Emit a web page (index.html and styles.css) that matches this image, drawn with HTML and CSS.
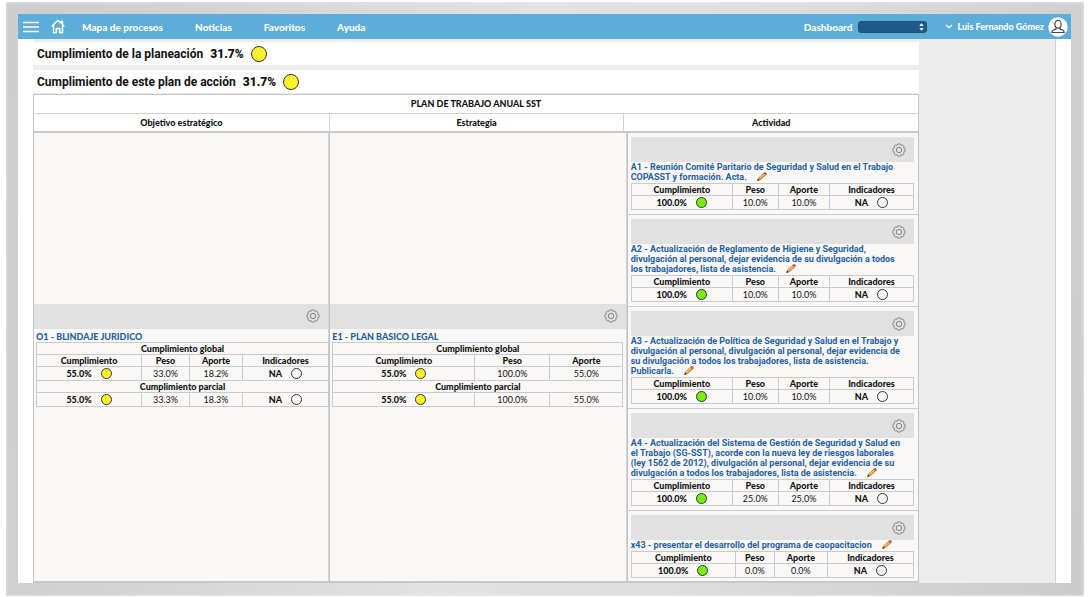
FILE: index.html
```html
<!DOCTYPE html>
<html lang="es">
<head>
<meta charset="utf-8">
<title>Plan de trabajo anual SST</title>
<link rel="stylesheet" href="styles.css">
</head>
<body>
<svg class="defs" aria-hidden="true">
  <symbol id="gear" viewBox="0 0 14 14">
    <g fill="none" stroke="#777" stroke-width="0.9">
      <path d="M5.050 2.300A2 2 0 0 1 8.950 2.300A2 2 0 0 1 11.700 5.050A2 2 0 0 1 11.700 8.950A2 2 0 0 1 8.950 11.700A2 2 0 0 1 5.050 11.700A2 2 0 0 1 2.300 8.950A2 2 0 0 1 2.300 5.050A2 2 0 0 1 5.050 2.300Z"/>
      <circle cx="7" cy="7" r="2.700"/>
    </g>
  </symbol>
  <symbol id="pencil" viewBox="0 0 10 9">
    <path d="M.5 8.600L1.600 5.900 6.900 1.100 8.700 3 3.300 7.700Z" fill="#f0a33c" stroke="#8a5220" stroke-width=".6"/>
    <path d="M6.600 1.300L7.800.3Q9.700.4 9.600 2L8.600 3Z" fill="#d0604f" stroke="#7b4a40" stroke-width=".4"/>
    <path d="M.4 8.700L1.200 6.700 2.500 8Z" fill="#222"/>
    <path d="M2.300 6.300L7 2.200" stroke="#ffe0a0" stroke-width=".7"/>
  </symbol>
</svg>
<div class="frame">
  <div class="screen">
    <header class="topbar">
      <button class="icon-btn menu" aria-label="Menú"><svg width="16" height="12" viewBox="0 0 16 12"><path d="M0 1.500H16M0 6H16M0 10.500H16" stroke="#fff" stroke-width="1.500"/></svg></button>
      <a class="home" href="#" aria-label="Inicio"><svg width="14" height="15" viewBox="0 0 14 15"><path d="M.7 7.500L7 1.200 10 4.200V2.500H11.500V5.700L13.300 7.500M2.500 6.500V13.800H5.300V9.500H8.700V13.800H11.500V6.500" fill="none" stroke="#fff" stroke-width="1.500" stroke-linejoin="round"/></svg></a>
      <nav class="nav">
        <a href="#">Mapa de procesos</a>
        <a href="#">Noticias</a>
        <a href="#">Favoritos</a>
        <a href="#">Ayuda</a>
      </nav>
      <label class="dash" for="dashboard">Dashboard</label>
      <span class="select-wrap">
        <select id="dashboard"><option></option></select>
        <svg class="arrows" width="5" height="8" viewBox="0 0 5 8"><path d="M.3 3L2.500.3 4.700 3ZM.3 5L2.500 7.700 4.700 5Z" fill="#fff"/></svg>
      </span>
      <button class="icon-btn user">
        <svg width="8" height="5" viewBox="0 0 8 5"><path d="M1 1L4 3.700 7 1" fill="none" stroke="#fff" stroke-width="1.300"/></svg>
        <span>Luis Fernando Gómez</span>
        <svg class="avatar" width="20" height="20" viewBox="0 0 20 20"><circle cx="10" cy="10" r="9.700" fill="#fff"/><g fill="none" stroke="#444" stroke-width="1.200"><ellipse cx="10" cy="7.300" rx="3.200" ry="3.900"/><path d="M8 10.700V12L5 13.200Q3.900 14 3.800 15.500H16.200Q16.100 14 15 13.200L12 12V10.700"/></g></svg>
      </button>
    </header>
    <main class="content">
      <div class="report">
        <h1 class="summary">Cumplimiento de la planeación <b>31.7%</b><i class="dot big yellow"></i></h1>
        <h2 class="summary">Cumplimiento de este plan de acción <b>31.7%</b><i class="dot big yellow"></i></h2>
        <section class="plan">
          <div class="plan-title">PLAN DE TRABAJO ANUAL SST</div>
          <div class="heads"><div>Objetivo estratégico</div><div>Estrategia</div><div>Actividad</div></div>
          <div class="cols">
            <div class="col middle">
              <div class="bar"><button class="icon-btn" aria-label="Opciones"><svg width="14" height="14"><use href="#gear"/></svg></button></div>
              <h3 class="goal">O1 - BLINDAJE JURIDICO</h3>
              <table class="data objective">
                <colgroup><col class="w105"><col class="w48"><col class="w53"><col class="w86"></colgroup>
                <tr><th colspan="4">Cumplimiento global</th></tr>
                <tr><th>Cumplimiento</th><th>Peso</th><th>Aporte</th><th>Indicadores</th></tr>
                <tr><td><b>55.0%</b><i class="dot yellow"></i></td><td>33.0%</td><td>18.2%</td><td><b>NA</b><i class="dot"></i></td></tr>
                <tr><th colspan="4">Cumplimiento parcial</th></tr>
                <tr><td><b>55.0%</b><i class="dot yellow"></i></td><td>33.3%</td><td>18.3%</td><td><b>NA</b><i class="dot"></i></td></tr>
              </table>
            </div>
            <div class="col middle">
              <div class="bar"><button class="icon-btn" aria-label="Opciones"><svg width="14" height="14"><use href="#gear"/></svg></button></div>
              <h3 class="goal">E1 - PLAN BASICO LEGAL</h3>
              <table class="data strategy">
                <colgroup><col class="w142"><col class="w75"><col class="w73"></colgroup>
                <tr><th colspan="3">Cumplimiento global</th></tr>
                <tr><th>Cumplimiento</th><th>Peso</th><th>Aporte</th></tr>
                <tr><td><b>55.0%</b><i class="dot yellow"></i></td><td>100.0%</td><td>55.0%</td></tr>
                <tr><th colspan="3">Cumplimiento parcial</th></tr>
                <tr><td><b>55.0%</b><i class="dot yellow"></i></td><td>100.0%</td><td>55.0%</td></tr>
              </table>
            </div>
            <div class="col">
              <article class="card">
                <div class="bar"><button class="icon-btn" aria-label="Opciones"><svg width="14" height="14"><use href="#gear"/></svg></button></div>
                <h3>A1 - Reunión Comité Paritario de Seguridad y Salud en el Trabajo<br>COPASST y formación. Acta.<button class="icon-btn edit" aria-label="Editar"><svg width="10" height="9"><use href="#pencil"/></svg></button></h3>
                <table class="data">
                  <colgroup><col class="w101"><col class="w46"><col class="w51"><col class="w84"></colgroup>
                  <tr><th>Cumplimiento</th><th>Peso</th><th>Aporte</th><th>Indicadores</th></tr>
                  <tr><td><b>100.0%</b><i class="dot green"></i></td><td>10.0%</td><td>10.0%</td><td><b>NA</b><i class="dot"></i></td></tr>
                </table>
              </article>
              <article class="card">
                <div class="bar"><button class="icon-btn" aria-label="Opciones"><svg width="14" height="14"><use href="#gear"/></svg></button></div>
                <h3>A2 - Actualización de Reglamento de Higiene y Seguridad,<br>divulgación al personal, dejar evidencia de su divulgación a todos<br>los trabajadores, lista de asistencia.<button class="icon-btn edit" aria-label="Editar"><svg width="10" height="9"><use href="#pencil"/></svg></button></h3>
                <table class="data">
                  <colgroup><col class="w101"><col class="w46"><col class="w51"><col class="w84"></colgroup>
                  <tr><th>Cumplimiento</th><th>Peso</th><th>Aporte</th><th>Indicadores</th></tr>
                  <tr><td><b>100.0%</b><i class="dot green"></i></td><td>10.0%</td><td>10.0%</td><td><b>NA</b><i class="dot"></i></td></tr>
                </table>
              </article>
              <article class="card">
                <div class="bar"><button class="icon-btn" aria-label="Opciones"><svg width="14" height="14"><use href="#gear"/></svg></button></div>
                <h3>A3 - Actualización de Política de Seguridad y Salud en el Trabajo y<br>divulgación al personal, divulgación al personal, dejar evidencia de<br>su divulgación a todos los trabajadores, lista de asistencia.<br>Publicarla.<button class="icon-btn edit" aria-label="Editar"><svg width="10" height="9"><use href="#pencil"/></svg></button></h3>
                <table class="data">
                  <colgroup><col class="w101"><col class="w46"><col class="w51"><col class="w84"></colgroup>
                  <tr><th>Cumplimiento</th><th>Peso</th><th>Aporte</th><th>Indicadores</th></tr>
                  <tr><td><b>100.0%</b><i class="dot green"></i></td><td>10.0%</td><td>10.0%</td><td><b>NA</b><i class="dot"></i></td></tr>
                </table>
              </article>
              <article class="card">
                <div class="bar"><button class="icon-btn" aria-label="Opciones"><svg width="14" height="14"><use href="#gear"/></svg></button></div>
                <h3>A4 - Actualización del Sistema de Gestión de Seguridad y Salud en<br>el Trabajo (SG-SST), acorde con la nueva ley de riesgos laborales<br>(ley 1562 de 2012), divulgación al personal, dejar evidencia de su<br>divulgación a todos los trabajadores, lista de asistencia.<button class="icon-btn edit" aria-label="Editar"><svg width="10" height="9"><use href="#pencil"/></svg></button></h3>
                <table class="data">
                  <colgroup><col class="w101"><col class="w46"><col class="w51"><col class="w84"></colgroup>
                  <tr><th>Cumplimiento</th><th>Peso</th><th>Aporte</th><th>Indicadores</th></tr>
                  <tr><td><b>100.0%</b><i class="dot green"></i></td><td>25.0%</td><td>25.0%</td><td><b>NA</b><i class="dot"></i></td></tr>
                </table>
              </article>
              <article class="card">
                <div class="bar"><button class="icon-btn" aria-label="Opciones"><svg width="14" height="14"><use href="#gear"/></svg></button></div>
                <h3>x43 - presentar el desarrollo del programa de caopacitacion<button class="icon-btn edit" aria-label="Editar"><svg width="10" height="9"><use href="#pencil"/></svg></button></h3>
                <table class="data">
                  <colgroup><col class="w104"><col class="w39"><col class="w53"><col class="w86"></colgroup>
                  <tr><th>Cumplimiento</th><th>Peso</th><th>Aporte</th><th>Indicadores</th></tr>
                  <tr><td><b>100.0%</b><i class="dot green"></i></td><td>0.0%</td><td>0.0%</td><td><b>NA</b><i class="dot"></i></td></tr>
                </table>
              </article>
            </div>
          </div>
        </section>
      </div>
    </main>
  </div>
</div>
</body>
</html>
```
FILE: styles.css
```css
* { box-sizing: border-box; }
body {
  margin: 0;
  padding: 2px 5px 0 6px;
  background: #fff;
  color: #111;
  font: 9px/12px "Trebuchet MS", Lato, sans-serif;
}
h1, h2, h3 { margin: 0; font-size: inherit; }
a { color: inherit; text-decoration: none; }
.defs { display: none; }
.icon-btn { padding: 0; border: 0; background: none; color: inherit; font: inherit; cursor: pointer; }
.icon-btn svg { display: block; }

.frame {
  padding: 12px 13px 13px 12px;
  background: linear-gradient(100deg, #cdcdcd, #d2d2d2 15%, #e2e2e2 45%, #dedede 65%, #cbcbcb);
  box-shadow: inset 0 0 3px #efefef;
}
.screen { background: #fff; }

.topbar {
  display: flex;
  align-items: center;
  height: 25px;
  padding: 0 3px 0 5px;
  background: #5cadd8;
  color: #fff;
  font-size: 10px;
  font-weight: 900;
}
.home { margin-left: 12px; }
.home svg { display: block; }
.nav { display: flex; gap: 32px; margin-left: 17px; }
.dash { margin-left: auto; }
.select-wrap { position: relative; display: flex; width: 69px; margin: 0 18px 0 6px; }
.select-wrap select {
  width: 100%;
  height: 12px;
  padding: 0;
  border: 1px solid #1c5583;
  border-radius: 3px;
  background: #205a8a;
  color: #fff;
  font-size: 9px;
  appearance: none;
}
.arrows { position: absolute; top: 2px; right: 3px; pointer-events: none; }
.user { display: flex; align-items: center; gap: 4px; font-size: 9px; font-weight: 900; }

.content { margin: 0 15px; border-right: 1px solid #d2d2d2; background: #ececec; }
.report { width: 86.7%; padding-top: 3px; }
.summary {
  display: flex;
  align-items: center;
  height: 23px;
  padding-left: 4px;
  background: #fff;
  font-family: "Trebuchet MS", Roboto, sans-serif;
  font-size: 12px;
  font-weight: 700;
}
h2.summary { margin-top: 5px; }
.summary b { margin-left: 7px; }
.dot {
  display: inline-block;
  width: 11px;
  height: 11px;
  margin-left: 9px;
  border: 1px solid #333;
  border-radius: 50%;
  vertical-align: -2px;
}
.dot.big { width: 16px; height: 16px; margin-left: 7px; }
.yellow { background: #fff22d; }
.green { background: #76f010; }

.plan { margin-top: 1px; border: 1px solid #c2c4c6; border-bottom: 2px solid #c8c8c8; background: #fff; }
.plan-title, .heads { font-weight: 900; text-align: center; line-height: 18px; }
.heads { display: grid; grid-template-columns: repeat(3, 1fr); border-top: 1px solid #d0d0d0; line-height: 17px; }
.heads div + div { border-left: 1px solid #d0d0d0; }
.cols {
  display: grid;
  grid-template-columns: 296fr 298fr 292fr;
  border-top: 2px solid #c8c8c8;
  background: #f9f8f7;
}
.col { min-width: 0; border-right: 1px solid #d4d4d4; }
.col + .col { border-left: 1px solid #c0c2c4; }
.col:last-child { border-right: 0; }
.middle { display: flex; flex-direction: column; justify-content: center; padding-bottom: 4px; }
.bar {
  display: flex;
  justify-content: flex-end;
  align-items: center;
  height: 25px;
  padding-right: 8px;
  background: #e1e1e1;
}
h3 { color: #1f5fa0; font-size: 9px; line-height: 10px; font-weight: 900; white-space: nowrap; }
h3.goal { padding: 3px 2px 0; }
.edit { margin-left: 10px; height: 9px; vertical-align: top; }
.card { padding: 4px 4px 4px 3px; border-bottom: 1px solid #ccc; }
.card:last-child { padding-bottom: 3px; border-bottom: 0; }
.card h3 { padding-bottom: 1px; font-family: "Trebuchet MS", Roboto, sans-serif; font-weight: 700; }

.data { width: 100%; border-collapse: collapse; table-layout: fixed; font-size: 9px; line-height: 11px; }
.middle .data { margin-left: 2px; }
.middle .objective { width: calc(100% - 2px); }
.middle .strategy { width: calc(100% - 5px); }
.data th, .data td { padding: 0; border: 1px solid #c8cacb; text-align: center; white-space: nowrap; }
.data th, .data b { font-weight: 900; }
.data td { height: 14px; }
.data th { height: 12px; }
.w39 { width: 39px; }
.w46 { width: 46px; }
.w48 { width: 48px; }
.w51 { width: 51px; }
.w53 { width: 53px; }
.w73 { width: 73px; }
.w75 { width: 75px; }
.w84 { width: 84px; }
.w86 { width: 86px; }
.w101 { width: 101px; }
.w104 { width: 104px; }
.w105 { width: 105px; }
.w142 { width: 142px; }
```
